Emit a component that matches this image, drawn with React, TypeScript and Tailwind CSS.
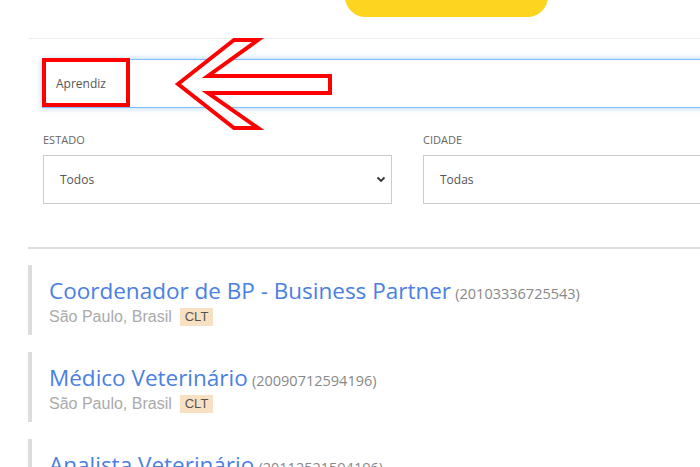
import React from 'react';

type Job = { title: string; code: string; place: string; kind: string };

const jobs: Job[] = [
  { title: 'Coordenador de BP - Business Partner', code: '(20103336725543)', place: 'São Paulo, Brasil', kind: 'CLT' },
  { title: 'Médico Veterinário', code: '(20090712594196)', place: 'São Paulo, Brasil', kind: 'CLT' },
  { title: 'Analista Veterinário', code: '(20112521594196)', place: 'São Paulo, Brasil', kind: 'CLT' },
];

const Chevron = () => (
  <svg width="10" height="7" viewBox="0 0 10 7" className="text-[#333]">
    <path d="M1.5 1.5 L5 5 L8.5 1.5" fill="none" stroke="currentColor" strokeWidth="1.8" />
  </svg>
);

const SelectBox = ({ label, value, arrow }: { label: string; value: string; arrow?: boolean }) => (
  <div className="flex flex-col">
    <div className="text-[11px] leading-[14px] text-[#666] uppercase">{label}</div>
    <div className="mt-[8px] h-[49px] border border-[#ccc] flex items-center justify-between pl-[16px] pr-[5px]">
      <span className="text-[12px] text-[#555]">{value}</span>
      {arrow && <Chevron />}
    </div>
  </div>
);

const JobItem = ({ job }: { job: Job }) => (
  <div className="border-l-4 border-[#ddd] h-[70px] pl-[17px] pt-[12px]">
    <div className="leading-[27px] whitespace-nowrap">
      <span className="text-[22.5px] font-medium text-[#4a80e3]">{job.title}</span>{' '}
      <span className="text-[14.5px] text-[#888]">{job.code}</span>
    </div>
    <div className="flex items-center gap-[8px] leading-[20px]" style={{ fontFamily: '"Liberation Sans", Arial, sans-serif' }}>
      <span className="text-[16px] text-[#aaa]">{job.place}</span>
      <span className="text-[13px] text-[#555] bg-[#f8e0c2] px-[5px] leading-[18px]">{job.kind}</span>
    </div>
  </div>
);

export default function App() {
  return (
    <div className="relative w-[700px] h-[467px] overflow-hidden bg-white" style={{ fontFamily: '"Open Sans", sans-serif' }}>
      <div className="h-[38px] pl-[345px] flex items-start">
        <div className="w-[203px] h-[41px] -mt-[24px] rounded-[22px] bg-[#fdd520]" />
      </div>
      <div className="ml-[28px] w-[800px]">
        <div className="border-t border-[#eee] px-[15px] pt-[20px]">
          <div className="-ml-px h-[49px] border border-[#80bdff] shadow-[0_0_6px_rgba(102,175,233,0.55)] flex items-center pl-[13px]">
            <span className="text-[12px] text-[#555]">Aprendiz</span>
          </div>
          <div className="grid grid-cols-[349px_349px] gap-[31px] mt-[25px]">
            <SelectBox label="Estado" value="Todos" arrow />
            <SelectBox label="Cidade" value="Todas" />
          </div>
        </div>
        <div className="mt-[43px] border-t-2 border-[#ddd]" />
        <div className="flex flex-col gap-[17px] mt-[16px]">
          {jobs.map((j) => (
            <JobItem key={j.code} job={j} />
          ))}
        </div>
      </div>

      {/* annotation */}
      <div className="absolute left-[42px] top-[58px] w-[88px] h-[49px] border-4 border-[#f00]" />
      <svg className="absolute left-0 top-0" width="700" height="467" viewBox="0 0 700 467">
        <polygon
          points="178,84 234,40 258,40 208,76 330,76 330,93 208,93 258,128 234,128"
          fill="white"
          stroke="#f00"
          strokeWidth="4"
          strokeLinejoin="miter"
        />
      </svg>
    </div>
  );
}
